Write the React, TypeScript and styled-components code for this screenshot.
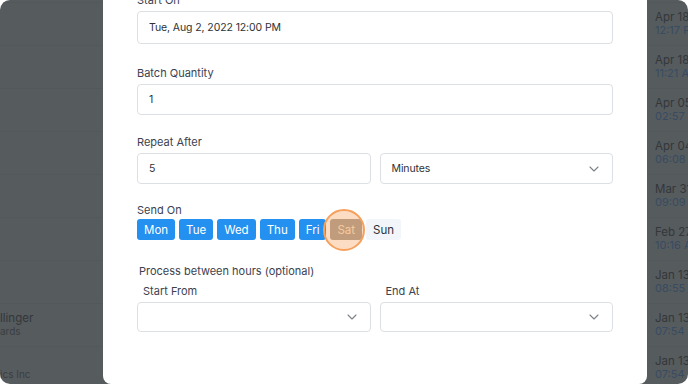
import styled, { createGlobalStyle } from 'styled-components';

const GlobalStyle = createGlobalStyle`
  html, body {
    margin: 0;
    padding: 0;
    background: #ffffff;
  }
  body {
    font-family: Inter, "Noto Sans", sans-serif;
  }
`;

const Screen = styled.div`
  width: 688px;
  height: 384px;
  overflow: hidden;
  border-radius: 10px;
  background: #565b5e;
  display: grid;
  grid-template-columns: 103px 544px 1fr;
`;

const BackColumn = styled.div`
  display: flex;
  flex-direction: column;
  padding-top: 2px;
  overflow: hidden;
`;

const BackRow = styled.div<{ inset?: number }>`
  height: 43px;
  flex: none;
  box-sizing: border-box;
  border-top: 1px solid #53585b;
  padding: 8px 0 0 ${({ inset }) => inset ?? 0}px;
  display: flex;
  flex-direction: column;
  white-space: nowrap;
`;

const BackMain = styled.div`
  font-size: 11.5px;
  line-height: 13px;
  height: 13px;
  color: #33373a;
`;

const BackSub = styled.div<{ blue?: boolean }>`
  font-size: ${({ blue }) => (blue ? '11px' : '10px')};
  line-height: 13px;
  height: 13px;
  color: ${({ blue }) => (blue ? '#384b61' : '#3a3e41')};
`;

const Modal = styled.div`
  background: #ffffff;
  border-radius: 0 0 8px 8px;
  padding: 0 34px;
  overflow: hidden;
`;

const Body = styled.div`
  margin-top: -7px;
  display: flex;
  flex-direction: column;
`;

const Field = styled.div<{ top?: number }>`
  display: flex;
  flex-direction: column;
  margin-top: ${({ top }) => top ?? 0}px;
`;

const Label = styled.div<{ indent?: number; below?: number }>`
  font-size: 11px;
  line-height: 14px;
  color: #3b4250;
  padding-left: ${({ indent }) => indent ?? 0}px;
  margin-bottom: ${({ below }) => below ?? 4}px;
`;

const Input = styled.div<{ h?: number }>`
  box-sizing: border-box;
  height: ${({ h }) => h ?? 31}px;
  border: 1px solid #dcdfe3;
  border-radius: 4px;
  padding: 0 13px 0 11px;
  display: flex;
  align-items: center;
  justify-content: space-between;
  font-size: 10.5px;
  letter-spacing: -0.1px;
  color: #2e3236;
  background: #ffffff;
`;

const Pair = styled.div`
  display: grid;
  grid-template-columns: 1fr 1fr;
  column-gap: 9px;
`;

const Days = styled.div`
  display: flex;
  gap: 4px;
  position: relative;
`;

const Day = styled.div<{ state: 'on' | 'hover' | 'off' }>`
  height: 21px;
  padding: 0 7px;
  border-radius: 3px;
  display: flex;
  align-items: center;
  font-size: 11.5px;
  background: ${({ state }) =>
    state === 'on' ? '#2490ef' : state === 'hover' ? '#a7a096' : '#f2f6fa'};
  color: ${({ state }) =>
    state === 'on' ? '#ffffff' : state === 'hover' ? '#f7e2c6' : '#2f3337'};
`;

const Ring = styled.div`
  position: absolute;
  left: 186px;
  top: -10px;
  width: 38px;
  height: 38px;
  border-radius: 50%;
  border: 2px solid #f6a05c;
  background: rgba(246, 150, 70, 0.32);
  pointer-events: none;
`;

const Section = styled.div`
  margin-top: 24px;
  display: flex;
  flex-direction: column;
`;

const Chevron = () => (
  <svg width="10" height="6" viewBox="0 0 10 6" fill="none">
    <path d="M1 1l4 4 4-4" stroke="#7d8288" strokeWidth="1.1" strokeLinecap="round" strokeLinejoin="round" />
  </svg>
);

const names = [
  { main: '', sub: '' },
  { main: '', sub: '' },
  { main: '', sub: '' },
  { main: '', sub: '' },
  { main: '', sub: '' },
  { main: '', sub: '' },
  { main: '', sub: '' },
  { main: 'llinger', sub: 'ards' },
  { main: '', sub: 'ics Inc' },
];

const stamps = [
  ['Apr 18', '12:17 PM'],
  ['Apr 18', '11:21 AM'],
  ['Apr 05', '02:57 PM'],
  ['Apr 04', '06:08 PM'],
  ['Mar 31', '09:09 AM'],
  ['Feb 27', '10:16 AM'],
  ['Jan 13', '08:55 AM'],
  ['Jan 13', '07:54 AM'],
  ['Jan 13', '07:54 AM'],
];

const days = ['Mon', 'Tue', 'Wed', 'Thu', 'Fri', 'Sat', 'Sun'];

export default function App() {
  return (
    <>
      <GlobalStyle />
      <Screen>
        <BackColumn>
          {names.map((n, i) => (
            <BackRow key={i}>
              <BackMain>{n.main}</BackMain>
              <BackSub>{n.sub}</BackSub>
            </BackRow>
          ))}
        </BackColumn>

        <Modal>
          <Body>
            <Field>
              <Label>Start On</Label>
              <Input h={33}>Tue, Aug 2, 2022 12:00 PM</Input>
            </Field>
            <Field top={22}>
              <Label>Batch Quantity</Label>
              <Input>1</Input>
            </Field>
            <Field top={20}>
              <Label>Repeat After</Label>
              <Pair>
                <Input>5</Input>
                <Input>
                  Minutes
                  <Chevron />
                </Input>
              </Pair>
            </Field>
            <Field top={19}>
              <Label below={2}>Send On</Label>
              <Days>
                {days.map((d) => (
                  <Day
                    key={d}
                    state={d === 'Sat' ? 'hover' : d === 'Sun' ? 'off' : 'on'}
                  >
                    {d}
                  </Day>
                ))}
                <Ring />
              </Days>
            </Field>
            <Section>
              <Label indent={2} below={6}>
                Process between hours (optional)
              </Label>
              <Pair>
                <Field>
                  <Label indent={6}>Start From</Label>
                  <Input h={30}>
                    <span />
                    <Chevron />
                  </Input>
                </Field>
                <Field>
                  <Label indent={6}>End At</Label>
                  <Input h={30}>
                    <span />
                    <Chevron />
                  </Input>
                </Field>
              </Pair>
            </Section>
          </Body>
        </Modal>

        <BackColumn>
          {stamps.map(([d, t], i) => (
            <BackRow key={i} inset={8}>
              <BackMain>{d}</BackMain>
              <BackSub blue>{t}</BackSub>
            </BackRow>
          ))}
        </BackColumn>
      </Screen>
    </>
  );
}
